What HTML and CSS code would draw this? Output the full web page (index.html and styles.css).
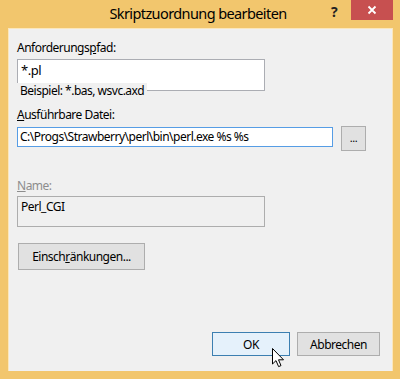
FILE: index.html
```html
<!DOCTYPE html>
<html>
<head>
<meta charset="utf-8">
<link rel="stylesheet" href="styles.css">
</head>
<body>
<div class="window">
  <div class="titlebar">
    <div class="title">Skriptzuordnung bearbeiten</div>
    <div class="help">?</div>
    <div class="close">
      <svg width="10" height="10" viewBox="0 0 10 10"><path d="M1.5 1.5 L8.5 8.5 M8.5 1.5 L1.5 8.5" stroke="#fff" stroke-width="1.8"/></svg>
    </div>
  </div>
  <div class="client">
    <div class="label l1">Anforderungs<u>p</u>fad:</div>
    <div class="textbox tb1">*.pl</div>
    <div class="hint">Beispiel: *.bas, wsvc.axd</div>
    <div class="label l2"><u>A</u>usführbare Datei:</div>
    <div class="filerow">
      <div class="textbox tb2">C:\Progs\Strawberry\perl\bin\perl.exe %s %s</div>
      <div class="btn browse">...</div>
    </div>
    <div class="label l3 disabled"><u>N</u>ame:</div>
    <div class="textbox tb3">Perl_CGI</div>
    <div class="btn limits">Einsch<u>r</u>änkungen...</div>
    <div class="spacer"></div>
    <div class="footer">
      <div class="btn ok">OK</div>
      <div class="btn cancel">Abbrechen</div>
    </div>
  </div>
  <svg class="cursor" width="13" height="20" viewBox="0 0 13 20">
    <path d="M0.5 0.5 L0.5 16 L4 12.6 L6.6 18.6 L9 17.6 L6.5 11.8 L11.5 11.8 Z" fill="#fff" stroke="#000" stroke-width="1" stroke-linejoin="miter"/>
  </svg>
</div>
</body>
</html>
```

FILE: styles.css
```css
html, body {
  margin: 0;
  padding: 0;
}
body {
  width: 400px;
  height: 379px;
  overflow: hidden;
  font-family: "Noto Sans", "Open Sans", sans-serif;
  font-size: 12px;
  letter-spacing: -0.5px;
  color: #000;
}
.window {
  position: relative;
  width: 400px;
  height: 379px;
  background: #f2c66d;
  box-sizing: border-box;
  display: flex;
  flex-direction: column;
}
.titlebar {
  position: relative;
  height: 28px;
  flex: none;
}
.title {
  position: absolute;
  left: 0;
  right: 4px;
  top: 3px;
  text-align: center;
  font-size: 14.5px;
  letter-spacing: -0.6px;
  line-height: 20px;
  color: #000;
}
.help {
  position: absolute;
  left: 331px;
  top: 3px;
  font-size: 14px;
  font-weight: bold;
  line-height: 18px;
  letter-spacing: 0;
  color: #222;
}
.close {
  position: absolute;
  left: 351px;
  top: 0;
  width: 42px;
  height: 20px;
  background: #c75050;
  display: flex;
  align-items: center;
  justify-content: center;
}
.client {
  margin: 0 7px 8px 8px;
  flex: 1;
  background: #f0f0f0;
  border: 1px solid #fbe7bd;
  border-bottom: none;
  display: flex;
  flex-direction: column;
  padding: 0 0 0 8px;
  box-sizing: border-box;
}
.label {
  line-height: 16px;
  height: 16px;
}
.label u, .btn u {
  text-decoration: underline;
  text-underline-offset: 1px;
}
.l1 { margin-top: 11px; }
.textbox {
  box-sizing: border-box;
  border: 1px solid #abadb3;
  background: #fff;
  padding: 2px 3px;
  line-height: 15px;
}
.tb1 {
  margin-top: 3px;
  width: 248px;
  height: 32px;
  padding-top: 3px;
  font-size: 13px;
}
.hint {
  position: relative;
  margin-top: -8px;
  align-self: flex-start;
  background: #f0f0f0;
  padding: 0 3px 0 4px;
  margin-left: -1px;
  line-height: 15px;
  height: 14px;
}
.l2 { margin-top: 10px; }
.filerow {
  margin-top: 3px;
  display: flex;
  align-items: flex-start;
}
.tb2 {
  margin-top: 1px;
  width: 316px;
  height: 20px;
  border-color: #569de5;
  padding: 1px 2px;
}
.btn {
  box-sizing: border-box;
  background: #e1e1e1;
  border: 1px solid #adadad;
  display: flex;
  align-items: center;
  justify-content: center;
  line-height: 15px;
}
.browse {
  margin-left: 8px;
  width: 25px;
  height: 25px;
  font-size: 11px;
  padding-bottom: 2px;
}
.l3 { margin-top: 27px; }
.disabled { color: #8d8d8d; }
.tb3 {
  margin-top: 2px;
  width: 248px;
  height: 31px;
  background: #f0f0f0;
  border-color: #adadad;
}
.limits {
  margin-top: 16px;
  margin-left: 1px;
  width: 127px;
  height: 27px;
}
.spacer { flex: 1; }
.footer {
  display: flex;
  justify-content: flex-end;
  gap: 7px;
  padding-right: 12px;
  margin-bottom: 15px;
}
.ok {
  width: 78px;
  height: 24px;
  background: #e5f1fb;
  border-color: #3c7fb1;
}
.cancel {
  width: 83px;
  height: 24px;
}
.cursor {
  position: absolute;
  left: 272px;
  top: 348px;
}
```
